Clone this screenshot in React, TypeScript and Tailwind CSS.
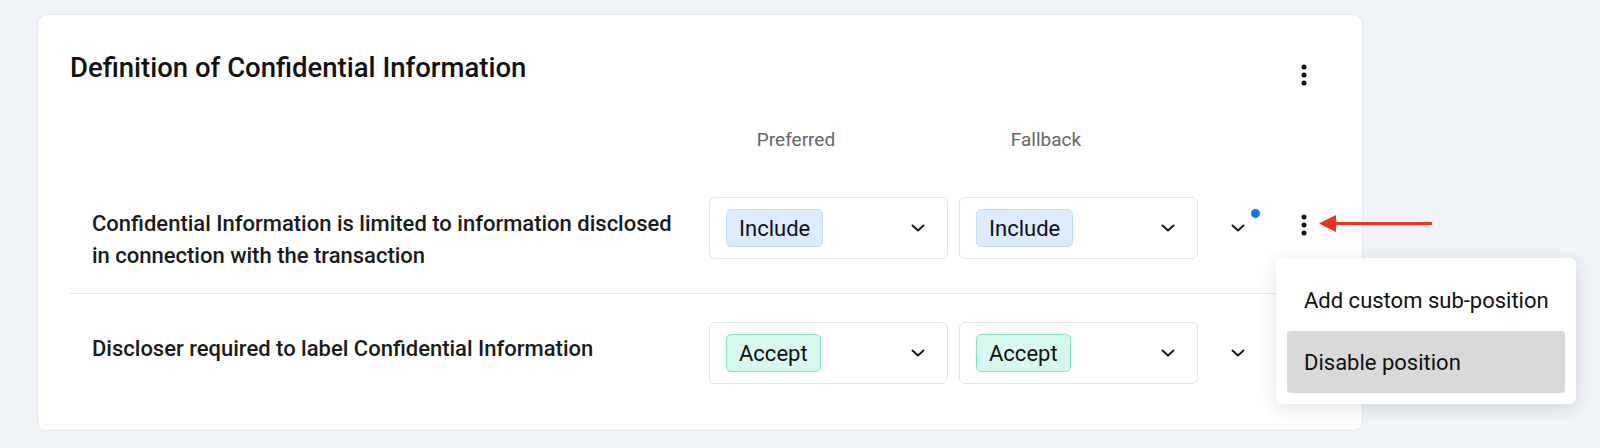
import React from "react";

type Tone = "blue" | "green";

type Position = {
  id: string;
  text: string;
  preferred: { label: string; tone: Tone };
  fallback: { label: string; tone: Tone };
  changed?: boolean;
};

const POSITIONS: Position[] = [
  {
    id: "limited",
    text: "Confidential Information is limited to information disclosed in connection with the transaction",
    preferred: { label: "Include", tone: "blue" },
    fallback: { label: "Include", tone: "blue" },
    changed: true,
  },
  {
    id: "label",
    text: "Discloser required to label Confidential Information",
    preferred: { label: "Accept", tone: "green" },
    fallback: { label: "Accept", tone: "green" },
  },
];

function Kebab() {
  return (
    <svg width="24" height="24" viewBox="0 0 24 24" fill="#111">
      <circle cx="12" cy="4" r="2.5" />
      <circle cx="12" cy="12" r="2.5" />
      <circle cx="12" cy="20" r="2.5" />
    </svg>
  );
}

function Chevron() {
  return (
    <svg width="14" height="8" viewBox="0 0 14 8" fill="none">
      <path d="M1.5 1.5 7 6.5l5.5-5" stroke="#1a1a1a" strokeWidth="2" strokeLinecap="round" strokeLinejoin="round" />
    </svg>
  );
}

function Pill({ label, tone }: { label: string; tone: Tone }) {
  return (
    <span
      className={`inline-flex h-[38px] items-center rounded-[5px] border px-[12px] text-[22px] text-[#111] ${
        tone === "blue" ? "border-[#c2dcfb] bg-[#dcebfd]" : "border-[#84e6c3] bg-[#d6f8ee]"
      }`}
    >
      {label}
    </span>
  );
}

function Select({ label, tone }: { label: string; tone: Tone }) {
  return (
    <div className="flex h-[62px] w-[239px] items-center justify-between rounded-[6px] border border-[#e2e4e8] bg-white pl-[16px] pr-[22px]">
      <Pill label={label} tone={tone} />
      <Chevron />
    </div>
  );
}

export default function App() {
  return (
    <div className="min-h-screen bg-[#f0f3f8] pl-[37px] pt-[14px] font-['Roboto',sans-serif]">
      <div className="relative w-[1326px] rounded-[10px] border border-[#e3e6ea] bg-white px-[32px] pb-[24px] pt-[35px]">
        {/* Header */}
        <div className="flex h-[32px] items-start justify-between">
          <h2 className="mt-[2px] text-[27.5px] font-medium leading-[32px] text-[#111]">
            Definition of Confidential Information
          </h2>
          <div className="mt-[13px] flex h-[24px] w-[52px] justify-center">
            <Kebab />
          </div>
        </div>

        {/* Column labels */}
        <div className="mb-[17px] mt-[46px] flex h-[24px] items-center text-[19px] leading-[24px] text-[#666]">
          <div className="flex-1" />
          <div className="flex gap-[11px]">
            <div className="w-[239px]">
              <div className="w-[174px] text-center">Preferred</div>
            </div>
            <div className="w-[239px]">
              <div className="w-[174px] text-center">Fallback</div>
            </div>
          </div>
          <div className="w-[132px]" />
        </div>

        {/* Rows */}
        {POSITIONS.map((p, i) => (
          <div
            key={p.id}
            className={`flex items-start pl-[22px] pt-[28px] ${
              i === 0 ? "border-b border-[#e5e7eb] pb-[21px]" : "pb-[22px]"
            }`}
          >
            <p className="flex-1 pr-[28px] pt-[11px] text-[22px] font-medium leading-[32px] text-[#1b1b1b]">
              {p.text}
            </p>
            <div className="flex gap-[11px]">
              <Select {...p.preferred} />
              <Select {...p.fallback} />
            </div>
            <div className="relative flex h-[62px] w-[80px] items-center justify-center">
              <Chevron />
              {p.changed && (
                <span className="absolute left-[53px] top-[12px] h-[9px] w-[9px] rounded-full bg-[#1a73e8]" />
              )}
            </div>
            <div className="flex h-[62px] w-[52px] justify-center pt-[16px]">
              <Kebab />
            </div>
          </div>
        ))}

        {/* Annotation arrow */}
        <svg
          className="absolute left-[1281px] top-[200px]"
          width="113"
          height="17"
          viewBox="0 0 113 17"
        >
          <line x1="14" y1="8.5" x2="113" y2="8.5" stroke="#f5301a" strokeWidth="3" />
          <polygon points="0,8.5 17,0 17,17" fill="#f5301a" />
        </svg>

        {/* Menu */}
        <div className="absolute left-[1238px] top-[243px] z-10 w-[300px] rounded-[6px] bg-white p-[11px] shadow-[0_4px_18px_rgba(30,40,60,0.14)]">
          <div className="flex h-[62px] items-center whitespace-nowrap rounded-[4px] px-[17px] text-[22px] text-[#111]">
            Add custom sub-position
          </div>
          <div className="flex h-[62px] items-center whitespace-nowrap rounded-[4px] bg-[#d9d9d9] px-[17px] text-[22px] text-[#111]">
            Disable position
          </div>
        </div>
      </div>
    </div>
  );
}
